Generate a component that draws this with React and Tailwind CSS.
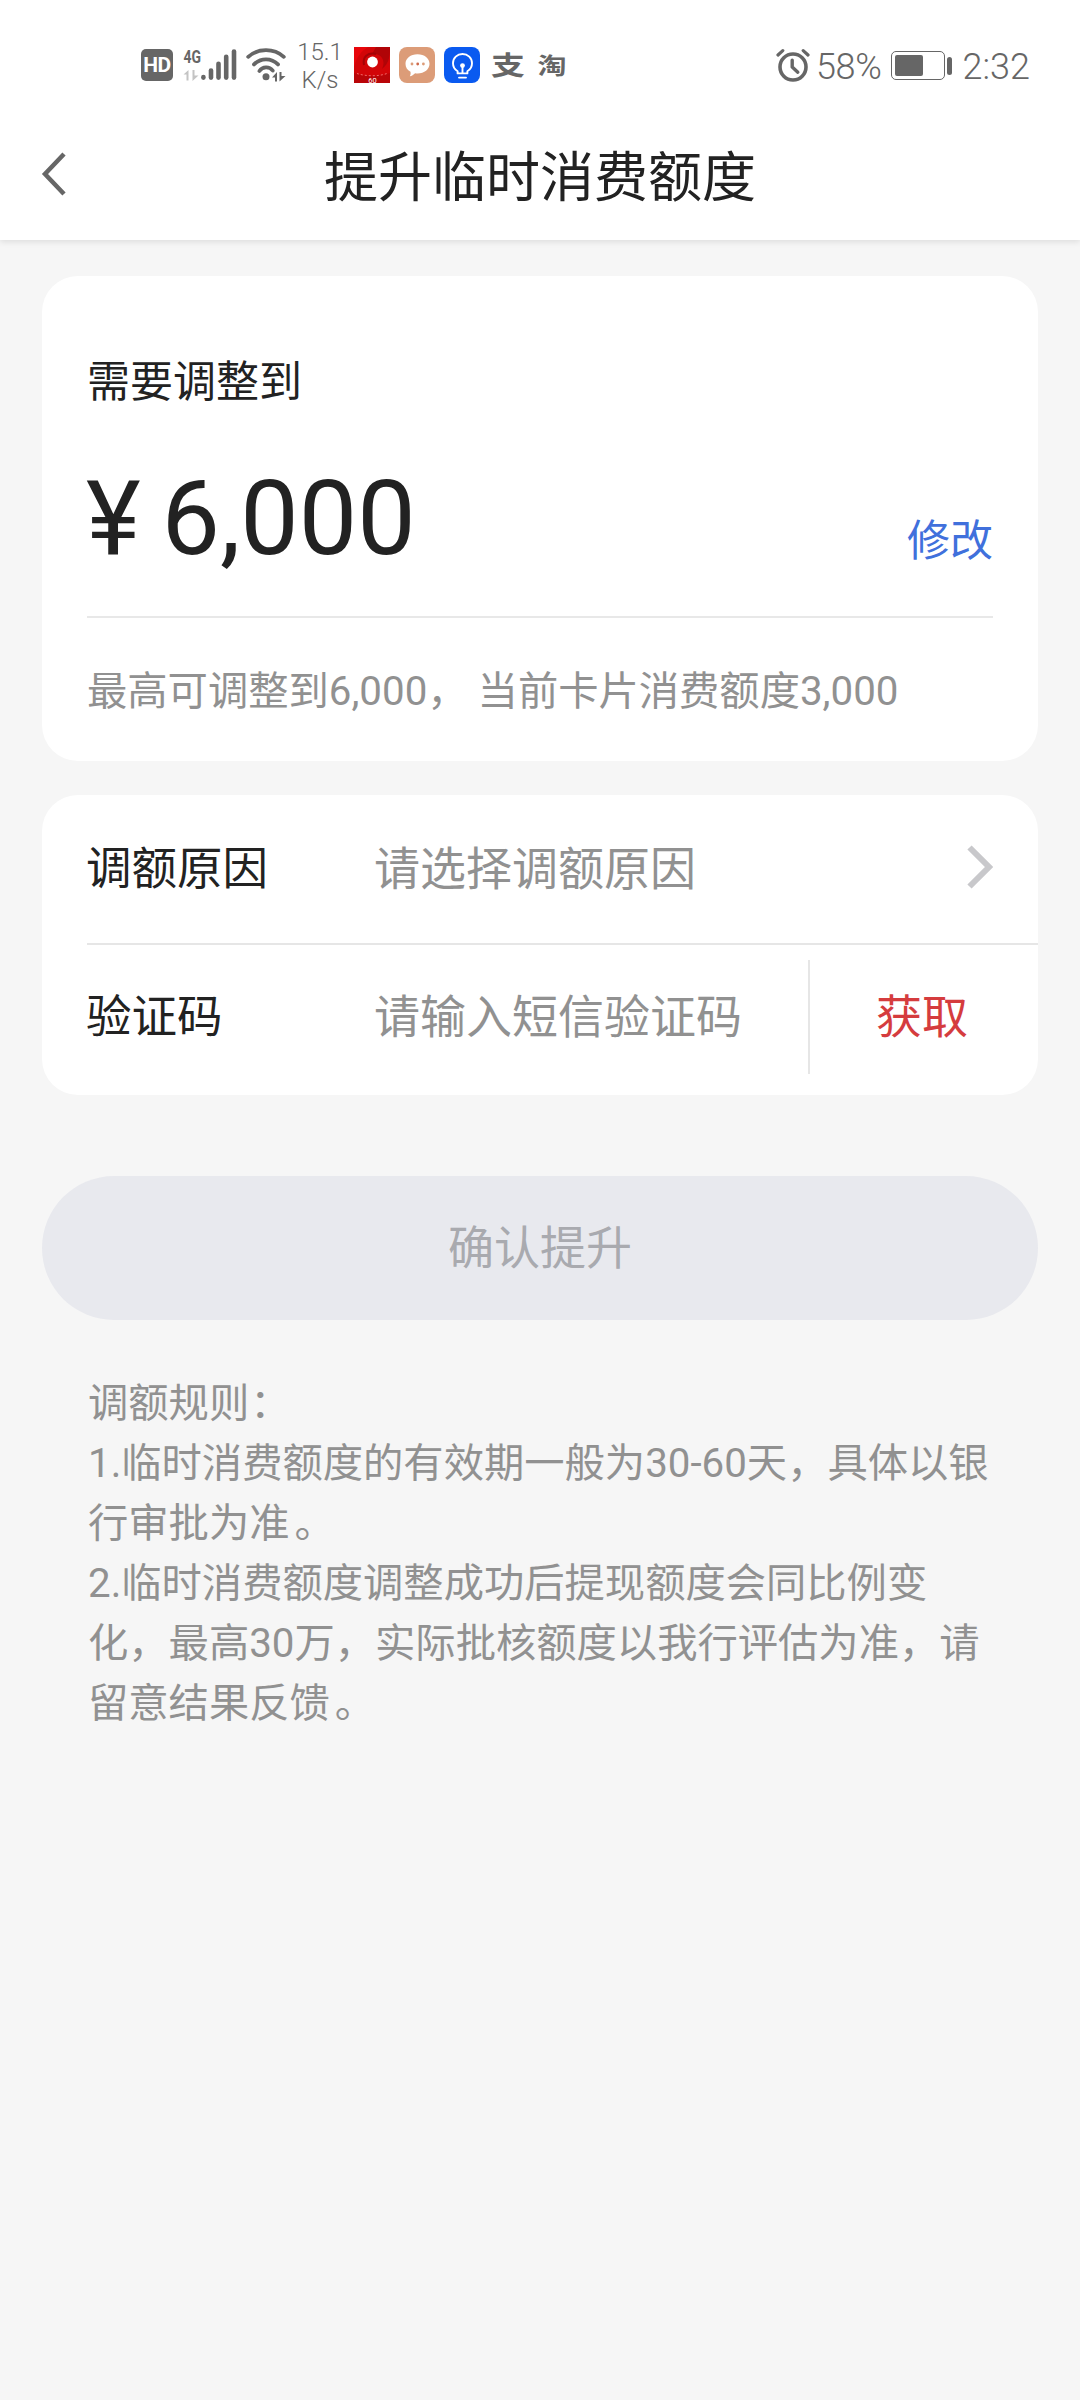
function SignalIcon() {
  return (
    <svg className="w-[54px] h-[36px] overflow-visible" viewBox="0 0 54 36" fill="none">
      <text x="0.5" y="15.6" fontSize="18" fontWeight="700" fill="#666" textLength="17.5" lengthAdjust="spacingAndGlyphs">4G</text>
      <path d="M0.5 27.5 L5.5 23 V33.5 H3.5 V27.5 Z" fill="#c4c4c4" />
      <path d="M9.5 23 V34 L15.5 28.5 H11.5 V23 Z" fill="#c4c4c4" />
      <g stroke="#666" strokeWidth="4.6" strokeLinecap="round">
        <path d="M20.4 30 V30.6" />
        <path d="M28 23.5 V30.6" />
        <path d="M35.5 16.8 V30.6" />
        <path d="M43.2 9.8 V30.6" />
        <path d="M51 4.6 V30.6" />
      </g>
    </svg>
  );
}

function WifiIcon() {
  return (
    <svg className="w-[40px] h-[36px]" viewBox="0 0 40 36" fill="none">
      <g stroke="#666" strokeWidth="3.8" strokeLinecap="round">
        <path d="M2.2 9.8 C12 0.9 28 0.9 37.8 9.8" />
        <path d="M8 17.4 C14.6 10.6 25.4 10.6 32 17.4" />
        <path d="M13.4 24 C16.6 19.4 23.2 19.2 26.8 23.6" />
      </g>
      <circle cx="20" cy="29.7" r="3.5" fill="#666" />
      <path d="M26 30.5 L31 25 V34.5 H29 V30.5 Z" fill="#666" />
      <path d="M33.5 25 V34.5 L39.5 29 H35.5 V25 Z" fill="#666" />
    </svg>
  );
}

function RedAppIcon() {
  return (
    <svg className="w-9 h-9 overflow-visible" viewBox="0 0 36 36" fill="none">
      <rect width="36" height="36" fill="#d20508" />
      <path d="M0 0 H14 C6 5 3 10 0 20 Z" fill="#e8060b" />
      <path d="M18 7 C28 6 32 14 28 22 C36 16 36 6 36 0 H22 Z" fill="#b00407" />
      <path d="M0 26 C10 30 26 30 36 26 V36 H0 Z" fill="#b90508" />
      <path d="M10 18 C8 10 14 5 22 7" stroke="#a30306" strokeWidth="2" />
      <circle cx="18.5" cy="15" r="5.4" fill="#fff" />
      <path d="M3 26.5 C12 29.5 25 29.5 33 26.5" stroke="#ee6a6a" strokeWidth="1" strokeDasharray="2 2" />
      <text x="18.5" y="35.5" fontSize="7.5" fill="#fff" textAnchor="middle">60</text>
    </svg>
  );
}

function ChatAppIcon() {
  return (
    <svg className="w-9 h-9" viewBox="0 0 36 36" fill="none">
      <rect width="36" height="36" rx="8" fill="#dc9c78" />
      <path d="M18.5 7.2 C25.5 7.2 30.5 11.3 30.5 16.8 C30.5 22.4 25.5 26.4 18.5 26.4 C17.6 26.4 16.9 26.3 16.1 26.2 C14.6 27.8 12.8 28.9 10.8 29.3 C11.6 28 11.8 26.5 11.5 24.8 C8.2 23.1 6.5 20.3 6.5 16.8 C6.5 11.3 11.5 7.2 18.5 7.2 Z" fill="#fff" />
      <circle cx="13" cy="17" r="1.4" fill="#dc9c78" />
      <circle cx="18.7" cy="17" r="1.4" fill="#cf6a4c" />
      <circle cx="24.4" cy="17" r="1.4" fill="#dc9c78" />
    </svg>
  );
}

function BulbAppIcon() {
  return (
    <svg className="w-9 h-9" viewBox="0 0 36 36" fill="none">
      <rect width="36" height="36" rx="8" fill="#0a5af0" />
      <g stroke="#fff" strokeWidth="1.9" strokeLinecap="round" strokeLinejoin="round">
        <path d="M13.6 26.4 V24.3 C10.6 22.4 9 19.5 9 16.2 C9 10.9 13.2 7 18.5 7 C23.8 7 28 10.9 28 16.2 C28 19.5 26.4 22.4 23.4 24.3 V26.4 Z" />
        <path d="M18.5 19.5 V26" />
        <path d="M15 30.6 H22" />
      </g>
      <circle cx="18.5" cy="18.6" r="2.4" fill="#fff" />
    </svg>
  );
}

function AlarmIcon() {
  return (
    <svg className="w-[34px] h-[34px]" viewBox="0 0 34 34" fill="none" stroke="#666" strokeLinecap="round">
      <circle cx="17" cy="19" r="13" strokeWidth="3.6" />
      <path d="M16.2 12.2 V19 L21.8 24.2" strokeWidth="3.4" strokeLinejoin="round" />
      <path d="M2 7 L6.8 2.6 M27.2 2.6 L32 7" strokeWidth="3.2" />
    </svg>
  );
}

function StatusBar() {
  return (
    <div className="h-[120px] pl-[141px] flex items-start text-[#666]">
      <div className="mt-[49px] w-8 h-8 rounded-[5px] bg-[#666] text-white text-[21px] font-bold leading-8 text-center tracking-[-0.5px]">
        HD
      </div>
      <div className="mt-[47px] ml-[10px]"><SignalIcon /></div>
      <div className="mt-[47px] ml-[9px]"><WifiIcon /></div>
      <div className="mt-[38px] ml-[10px] w-[48px] text-[24px] leading-7 text-center font-[350]">
        <div className="whitespace-nowrap">15.1</div>
        <div>K/s</div>
      </div>
      <div className="mt-[47px] ml-[10px] flex gap-[9px]">
        <RedAppIcon />
        <ChatAppIcon />
        <BulbAppIcon />
      </div>
      <div className="mt-[48px] ml-[11px] w-[34px] text-[34px] font-bold leading-9 text-center scale-y-[0.78]">支</div>
      <div className="mt-[48px] ml-[12px] w-[30px] text-[29px] font-bold leading-9 text-center scale-y-[0.8]">淘</div>

      <div className="mt-[48px] ml-auto"><AlarmIcon /></div>
      <div className="mt-[46px] ml-[6px] text-[36px] leading-[42px] tracking-[-0.3px] font-[350]">58%</div>
      <div className="mt-[51px] ml-[9px] flex items-center">
        <div className="w-[54px] h-[29px] rounded-[5px] border-[1.5px] border-[#666] p-[3px]">
          <div className="w-[28px] h-full rounded-[2px] bg-[#666]" />
        </div>
        <div className="ml-[2px] w-[5px] h-[18px] rounded-full bg-[#666]" />
      </div>
      <div className="mt-[46px] ml-[11px] mr-[50px] text-[36px] leading-[42px] font-[350]">2:32</div>
    </div>
  );
}

function Header({ title }) {
  return (
    <div className="h-[120px] grid grid-cols-[1fr_auto_1fr] items-center">
      <svg className="ml-[40px] -mt-[12px] w-[28px] h-[44px]" viewBox="0 0 28 44" fill="none" stroke="#666" strokeWidth="4.5">
        <path d="M24 2 L5 22 L24 42" />
      </svg>
      <h1 className="-mt-[3px] text-[54px] leading-[72px] text-[#222]">{title}</h1>
    </div>
  );
}

const rules = [
  { text: '调额规则', end: '：' },
  { text: '1.临时消费额度的有效期一般为30-60天，具体以银' },
  { text: '行审批为准', end: '。' },
  { text: '2.临时消费额度调整成功后提现额度会同比例变' },
  { text: '化，最高30万，实际批核额度以我行评估为准，请' },
  { text: '留意结果反馈', end: '。' },
];

export default function App() {
  return (
    <div className="w-[1080px] h-[2400px] overflow-hidden bg-[#f6f6f6] font-['Roboto','Noto_Sans_CJK_SC',sans-serif]">
      <div className="relative bg-white shadow-[0_2px_6px_rgba(0,0,0,0.1)]">
        <StatusBar />
        <Header title="提升临时消费额度" />
      </div>

      <div className="px-[42px] pt-9">
        {/* amount */}
        <div className="h-[485px] rounded-[36px] bg-white px-[45px] pt-[76px]">
          <div className="text-[43px] leading-[60px] text-[#222]">需要调整到</div>
          <div className="mt-[55px] flex items-end justify-between">
            <div className="-ml-px text-[104px] leading-[104px] text-[#222] whitespace-pre [word-spacing:-5px]">¥ 6,000</div>
            <div className="text-[43px] leading-[60px] text-[#4070dc]">修改</div>
          </div>
          <div className="mt-[45px] h-[2px] bg-[#e8e8e8]" />
          <div className="mt-[44px] text-[40.3px] leading-[60px] text-[#919191] whitespace-pre">
            最高可调整到6,000， 当前卡片消费额度3,000
          </div>
        </div>

        {/* form */}
        <div className="mt-[34px] h-[300px] rounded-[36px] bg-white pl-[45px] text-[46px]">
          <div className="h-[148px] flex items-center pr-[45px]">
            <div className="w-[288px] -ml-px pt-[2px] text-[45.5px] text-[#222]">调额原因</div>
            <div className="flex-1 text-[#919191]">请选择调额原因</div>
            <svg className="-mt-[4px] w-[26px] h-[44px]" viewBox="0 0 26 44" fill="none" stroke="#c8c8cb" strokeWidth="6">
              <path d="M2.5 2.5 L22 22 L2.5 41.5" />
            </svg>
          </div>
          <div className="h-[2px] bg-[#e6e6e6]" />
          <div className="h-[144px] flex items-center">
            <div className="w-[288px] -ml-px pt-[2px] text-[45.5px] text-[#222]">验证码</div>
            <div className="flex-1 text-[#919191]">请输入短信验证码</div>
            <div className="w-[2px] h-[114px] bg-[#e6e6e6]" />
            <div className="w-[228px] pr-[4px] text-center text-[#d53c3e]">获取</div>
          </div>
        </div>

        <button className="mt-[81px] block w-full h-[144px] rounded-full bg-[#e8e9ee] text-[46px] text-[#a9aaaf]">
          确认提升
        </button>

        <div className="mt-[54px] pl-[46px] text-[40.3px] leading-[60px] text-[#919191]">
          {rules.map(({ text, end }) => (
            <div key={text} className="whitespace-nowrap">
              {text}
              {end && <span className={end === '。' ? 'ml-[5px]' : 'ml-px'}>{end}</span>}
            </div>
          ))}
        </div>
      </div>
    </div>
  );
}
